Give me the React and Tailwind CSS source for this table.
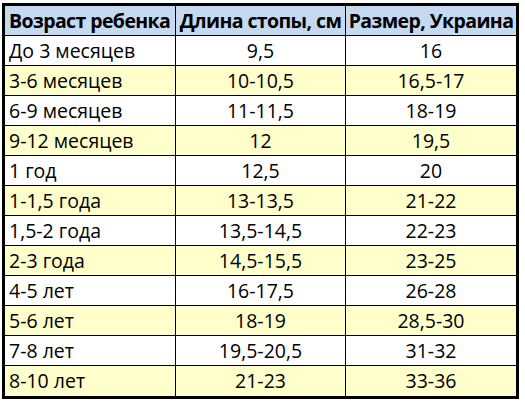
import React from "react";

const rows = [
  ["До 3 месяцев", "9,5", "16"],
  ["3-6 месяцев", "10-10,5", "16,5-17"],
  ["6-9 месяцев", "11-11,5", "18-19"],
  ["9-12 месяцев", "12", "19,5"],
  ["1 год", "12,5", "20"],
  ["1-1,5 года", "13-13,5", "21-22"],
  ["1,5-2 года", "13,5-14,5", "22-23"],
  ["2-3 года", "14,5-15,5", "23-25"],
  ["4-5 лет", "16-17,5", "26-28"],
  ["5-6 лет", "18-19", "28,5-30"],
  ["7-8 лет", "19,5-20,5", "31-32"],
  ["8-10 лет", "21-23", "33-36"],
];

export default function App() {
  return (
    <div className="w-[525px] h-[405px] bg-white pt-[3px] pl-[2px]" style={{ fontFamily: '"Open Sans", "Noto Sans", sans-serif' }}>
      <div className="w-[517px] border-[3px] border-black text-black text-[19.5px] leading-none">
        <div className="grid grid-cols-[171px_170px_1fr] h-[30px] bg-[#c5d9f1] border-b border-black font-bold">
          <div className="flex items-center pl-[4px] border-r border-black whitespace-nowrap tracking-[-0.6px]">Возраст ребенка</div>
          <div className="flex items-center justify-center border-r border-black whitespace-nowrap tracking-[-0.6px]">Длина стопы, см</div>
          <div className="flex items-center justify-center whitespace-nowrap tracking-[-0.6px]">Размер, Украина</div>
        </div>
        {rows.map((r, i) => (
          <div
            key={i}
            className={
              "grid grid-cols-[171px_170px_1fr] h-[30px] " +
              (i % 2 === 1 ? "bg-[#ffffcc] " : "bg-white ") +
              (i < rows.length - 1 ? "border-b border-black" : "")
            }
          >
            <div className="flex items-center pl-[4px] border-r border-black whitespace-nowrap">{r[0]}</div>
            <div className="flex items-center justify-center border-r border-black whitespace-nowrap">{r[1]}</div>
            <div className="flex items-center justify-center whitespace-nowrap">{r[2]}</div>
          </div>
        ))}
      </div>
    </div>
  );
}
